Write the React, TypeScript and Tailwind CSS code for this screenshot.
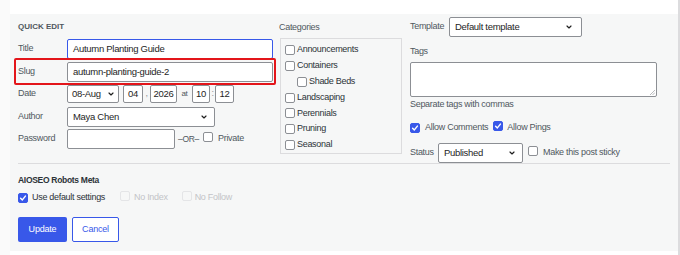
import React from 'react';

const Check = ({ checked = false, disabled = false }: { checked?: boolean; disabled?: boolean }) => (
    <span
        className={`inline-flex items-center justify-center w-[10px] h-[10px] rounded-[2px] shrink-0 ${checked ? 'bg-[#3858e9] border border-[#3858e9]' : disabled ? 'border border-[#e4e5e7] bg-[#f6f7f7]' : 'border border-[#8c8f94] bg-white'
            }`}
    >
        {checked && (
            <svg width="8" height="8" viewBox="0 0 10 10" fill="none" stroke="white" strokeWidth="1.8" strokeLinecap="round" strokeLinejoin="round">
                <path d="M2 5.2 4.2 7.4 8 2.6" />
            </svg>
        )}
    </span>
);

const Chevron = () => (
    <svg width="8" height="8" viewBox="0 0 10 10" fill="none" stroke="#1e1e1e" strokeWidth="1.5" strokeLinecap="round" strokeLinejoin="round">
        <path d="M2.5 3.8 5 6.2 7.5 3.8" />
    </svg>
);

const Box = ({ className = '', children }: { className?: string; children?: React.ReactNode }) => (
    <div className={`flex items-center shrink-0 bg-white border border-[#8c8f94] rounded-[2px] text-[9.5px] tracking-[-0.3px] text-[#1e1e1e] ${className}`}>{children}</div>
);

const Row = ({ label, children }: { label: string; children: React.ReactNode }) => (
    <div className="flex items-center">
        <span className="w-[49px] shrink-0 text-[#50575e]">{label}</span>
        {children}
    </div>
);

const categories: { name: string; indent?: boolean }[] = [
    { name: 'Announcements' },
    { name: 'Containers' },
    { name: 'Shade Beds', indent: true },
    { name: 'Landscaping' },
    { name: 'Perennials' },
    { name: 'Pruning' },
    { name: 'Seasonal' },
];

export default function App() {
    return (
        <div className="w-[680px] h-[255px] bg-white flex font-['Liberation_Sans',Arial,sans-serif] text-[9px] tracking-[-0.3px] text-[#1e1e1e]">
            <div className="w-[10px] shrink-0 bg-[#fafafa]" />
            <div className="w-[668px] mt-[14px] h-[237px] bg-[#f6f7f7] px-[8px] flex flex-col">
                <div className="flex">
                    {/* Left fieldset */}
                    <div className="w-[261px] shrink-0 pt-[7px] flex flex-col">
                        <div className="text-[8px] tracking-normal font-bold text-[#50575e] uppercase h-[12px] leading-[12px]">Quick Edit</div>
                        <div className="mt-[6px] flex flex-col">
                            <Row label="Title">
                                <Box className="w-[206px] h-[20px] px-[5px] !border-[#3858e9] border-[1.5px]">Autumn Planting Guide</Box>
                            </Row>
                            <div className="relative mt-[3px]">
                                <Row label="Slug">
                                    <Box className="w-[206px] h-[20px] px-[5px]">autumn-planting-guide-2</Box>
                                </Row>
                                <div className="absolute left-[-4px] top-[-4px] w-[262px] h-[27px] border-2 border-[#e3151a] rounded-[2px]" />
                            </div>
                            <div className="mt-[3px]">
                                <Row label="Date">
                                    <div className="flex items-center h-[18px]">
                                        <Box className="w-[52px] h-[18px] pl-[4px] pr-[3px] justify-between">08-Aug<Chevron /></Box>
                                        <Box className="w-[20px] h-[18px] ml-[4px] justify-center">04</Box>
                                        <span className="w-[7px] text-center text-[#8c8f94]">,</span>
                                        <Box className="w-[27px] h-[18px] justify-center">2026</Box>
                                        <span className="w-[15px] text-center text-[8px] text-[#50575e]">at</span>
                                        <Box className="w-[18px] h-[18px] justify-center">10</Box>
                                        <span className="w-[5px] text-center text-[#8c8f94]">:</span>
                                        <Box className="w-[19px] h-[18px] justify-center">12</Box>
                                    </div>
                                </Row>
                            </div>
                            <div className="mt-[4px]">
                                <Row label="Author">
                                    <Box className="w-[148px] h-[20px] pl-[5px] pr-[6px] justify-between">Maya Chen<Chevron /></Box>
                                </Row>
                            </div>
                            <div className="mt-[2px]">
                                <Row label="Password">
                                    <Box className="w-[108px] h-[20px]" />
                                    <span className="ml-[3px] w-[22px] text-[8.5px] text-[#50575e]">–OR–</span>
                                    <span className="ml-[3px]"><Check /></span>
                                    <span className="ml-[5px] text-[#50575e]">Private</span>
                                </Row>
                            </div>
                        </div>
                    </div>

                    {/* Categories */}
                    <div className="w-[123px] shrink-0 pt-[7px] flex flex-col">
                        <div className="text-[#50575e] h-[12px] leading-[12px]">Categories</div>
                        <div className="mt-[5px] ml-[1px] w-[122px] h-[116px] border border-[#dcdcde] pt-[3px] pl-[4px] flex flex-col">
                            {categories.map((c) => (
                                <div key={c.name} className={`flex items-center h-[16px] ${c.indent ? 'pl-[12px]' : ''}`}>
                                    <Check />
                                    <span className="ml-[2px] text-[#2c3338]">{c.name}</span>
                                </div>
                            ))}
                        </div>
                    </div>

                    {/* Right column */}
                    <div className="ml-[8px] w-[250px] shrink-0 pt-[3px] flex flex-col">
                        <div className="flex items-center">
                            <span className="text-[#50575e] w-[39px]">Template</span>
                            <Box className="w-[133px] h-[20px] pl-[5px] pr-[8px] justify-between">Default template<Chevron /></Box>
                        </div>
                        <div className="mt-[8px] text-[#50575e] h-[12px] leading-[12px]">Tags</div>
                        <div className="mt-[5px] w-[247px] h-[35px] bg-white border border-[#8c8f94] rounded-[2px] relative">
                            <svg className="absolute right-[1px] bottom-[1px]" width="6" height="6" viewBox="0 0 6 6" stroke="#a7aaad" strokeWidth="0.8">
                                <path d="M1 6 6 1M3.5 6 6 3.5" />
                            </svg>
                        </div>
                        <div className="mt-[1px] h-[12px] leading-[12px] text-[#50575e]">Separate tags with commas</div>
                        <div className="mt-[12px] h-[12px] flex items-center">
                            <Check checked />
                            <span className="ml-[5px] text-[#50575e]">Allow Comments</span>
                            <span className="ml-[5px]"><Check checked /></span>
                            <span className="ml-[4px] text-[#50575e]">Allow Pings</span>
                        </div>
                        <div className="mt-[9px] flex items-center">
                            <span className="text-[#50575e] w-[28px]">Status</span>
                            <Box className="w-[85px] h-[20px] pl-[5px] pr-[6px] justify-between">Published<Chevron /></Box>
                            <span className="ml-[5px]"><Check /></span>
                            <span className="ml-[5px] text-[#50575e]">Make this post sticky</span>
                        </div>
                    </div>
                </div>

                <div className="border-t border-[#dcdcde]" />

                <div className="pt-[10px] flex flex-col">
                    <div className="font-bold text-[8.5px] text-[#2c3338] h-[12px] leading-[12px]">AIOSEO Robots Meta</div>
                    <div className="mt-[6px] h-[12px] flex items-center">
                        <Check checked />
                        <span className="ml-[4px] text-[#2c3338]">Use default settings</span>
                        <span className="ml-[15px]"><Check disabled /></span>
                        <span className="ml-[4px] text-[#c3c4c7]">No Index</span>
                        <span className="ml-[14px]"><Check disabled /></span>
                        <span className="ml-[3px] text-[#c3c4c7]">No Follow</span>
                    </div>
                    <div className="mt-[13px] flex gap-[5px]">
                        <button className="w-[49px] h-[25px] bg-[#3858e9] text-white rounded-[2px] text-[9px] tracking-[-0.2px]">Update</button>
                        <button className="w-[47px] h-[25px] bg-white border border-[#3858e9] text-[#3858e9] rounded-[2px] text-[9px] tracking-[-0.2px]">Cancel</button>
                    </div>
                </div>
            </div>
            <div className="w-[2px] shrink-0 bg-[#dcdcde]" />
        </div>
    );
}
